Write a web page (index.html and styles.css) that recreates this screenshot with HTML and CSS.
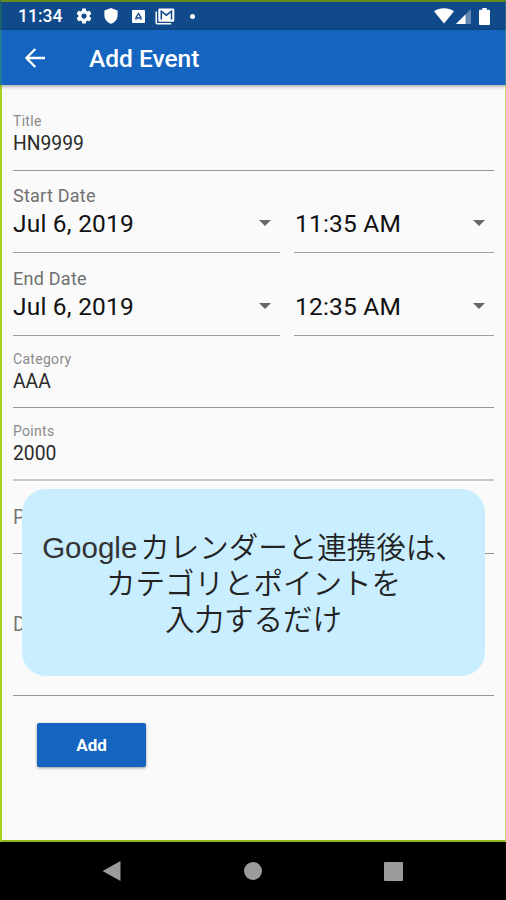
FILE: index.html
```html
<!DOCTYPE html>
<html lang="ja">
<head>
<meta charset="UTF-8">
<meta name="viewport" content="width=device-width, initial-scale=1.0">
<title>Add Event</title>
<link rel="stylesheet" href="styles.css">
</head>
<body>

<div class="screen">

    <div class="status-bar">
        <span class="clock">11:34</span>
        <svg class="icon-gear" width="18" height="18" viewBox="0 0 24 24"><path fill="#fff" d="M19.43 12.98c.04-.32.07-.64.07-.98s-.03-.66-.07-.98l2.11-1.65c.19-.15.24-.42.12-.64l-2-3.46c-.12-.22-.39-.3-.61-.22l-2.49 1c-.52-.4-1.08-.73-1.69-.98l-.38-2.65C14.46 2.18 14.25 2 14 2h-4c-.25 0-.46.18-.49.42l-.38 2.65c-.61.25-1.17.59-1.69.98l-2.49-1c-.23-.09-.49 0-.61.22l-2 3.46c-.13.22-.07.49.12.64l2.11 1.65c-.04.32-.07.65-.07.98s.03.66.07.98l-2.11 1.65c-.19.15-.24.42-.12.64l2 3.46c.12.22.39.3.61.22l2.49-1c.52.4 1.08.73 1.69.98l.38 2.65c.03.24.24.42.49.42h4c.25 0 .46-.18.49-.42l.38-2.65c.61-.25 1.17-.59 1.69-.98l2.49 1c.23.09.49 0 .61-.22l2-3.46c.12-.22.07-.49-.12-.64l-2.11-1.65zM12 15.5c-1.93 0-3.5-1.57-3.5-3.5s1.57-3.5 3.5-3.5 3.5 1.57 3.5 3.5-1.57 3.5-3.5 3.5z"/></svg>
        <svg class="icon-shield" width="14" height="16" viewBox="0 0 14 16"><path fill="#fff" d="M7 0l6.6 2.4v4.8c0 4-2.700 7.300-6.600 8.600C3.100 14.500.4 11.200.4 7.200V2.400z"/></svg>
        <svg class="icon-a" width="13" height="13" viewBox="0 0 13 13"><rect width="13" height="13" rx="1" fill="#fff"/><path d="M4 9.800V7.500L6.500 3.500 9 7.500v2.300M4.800 8h3.400" fill="none" stroke="#104a8b" stroke-width="1.300"/></svg>
        <svg class="icon-mail" width="20" height="17" viewBox="0 0 20 17"><path d="M1.200 3.500v11.300q0 1 1 1h14" fill="none" stroke="#fff" stroke-width="1.500"/><rect x="3.300" y=".5" width="16" height="13.300" rx="1.300" fill="#fff"/><path d="M6.300 11.500V3.200l5.100 4 5.100-4v8.300" fill="none" stroke="#104a8b" stroke-width="1.500"/></svg>
        <span class="dot"></span>
        <div class="signals">
            <svg width="20" height="16" viewBox="0 0 20 16"><path fill="#fff" d="M0 3.200C5.500-.8 14.500-.8 20 3.200L10 15.600z"/></svg>
            <svg width="15" height="15" viewBox="0 0 15 15"><path fill="#fff" fill-opacity=".35" d="M15 0v15H0z"/><path fill="#fff" d="M9.500 5.500V15H0z"/></svg>
            <svg class="battery" width="11" height="17" viewBox="0 0 11 17"><path fill="#fff" d="M3.300 0h4.400v1.800H10q1 0 1 1V16q0 1-1 1H1q-1 0-1-1V2.800q0-1 1-1h2.300z"/></svg>
        </div>
    </div>

    <div class="app-bar">
        <svg width="20" height="20" viewBox="0 0 20 20"><path d="M20 10H2M10.300 1L1.400 10l8.900 9" fill="none" stroke="#fff" stroke-width="2.300"/></svg>
        <span class="app-title">Add Event</span>
    </div>

    <div class="form">
        <div class="field field-first">
            <div class="label">Title</div>
            <div class="value">HN9999</div>
        </div>

        <div class="date-row">
            <div class="picker">
                <div class="date-label">Start Date</div>
                <div class="date-value">Jul 6, 2019<span class="arrow"></span></div>
            </div>
            <div class="picker">
                <div class="date-value">11:35 AM<span class="arrow"></span></div>
            </div>
        </div>

        <div class="date-row date-row-end">
            <div class="picker">
                <div class="date-label">End Date</div>
                <div class="date-value">Jul 6, 2019<span class="arrow"></span></div>
            </div>
            <div class="picker">
                <div class="date-value">12:35 AM<span class="arrow"></span></div>
            </div>
        </div>

        <div class="field">
            <div class="label">Category</div>
            <div class="value">AAA</div>
        </div>

        <div class="field field-points">
            <div class="label">Points</div>
            <div class="value">2000</div>
        </div>

        <div class="field field-empty">P</div>
        <div class="field field-empty field-tall">D</div>

        <button class="add-btn">Add</button>
    </div>

    <div class="nav-bar">
        <svg width="19" height="22" viewBox="0 0 19 22"><path fill="#9b9b9b" d="M18.500 1v20L.5 11z"/></svg>
        <span class="home"></span>
        <span class="recent"></span>
    </div>

    <div class="caption"><span class="latin">Google</span>カレンダーと連携後は、<br>カテゴリとポイントを<br>入力するだけ</div>

</div>

</body>
</html>
```
FILE: styles.css
```css
*{
    box-sizing:border-box;
}

body{
    margin:0;
    background:#000;
    font-family:Roboto, "Noto Sans CJK JP", sans-serif;
}

.screen{
    position:relative;
    width:506px;
    height:900px;
    display:flex;
    flex-direction:column;
    overflow:hidden;
}

/* top bars */
.status-bar{
    height:30px;
    flex:none;
    display:flex;
    align-items:center;
    padding:0 15px 0 16px;
    background:#104a8b;
    border-top:2px solid #648c1c;
    border-left:2px solid #195f70;
    border-right:1px solid #2b6a78;
    color:#fff;
}

.clock{
    width:45px;
    font-size:17.5px;
    font-weight:500;
}

.icon-gear{ margin-left:12px; }
.icon-shield{ margin-left:11px; }
.icon-a{ margin-left:14px; }
.icon-mail{ margin-left:10px; }

.dot{
    width:5px;
    height:5px;
    margin-left:15px;
    border-radius:50%;
    background:#fff;
}

.signals{
    display:flex;
    align-items:center;
    margin-left:auto;
    gap:2px;
}

.battery{
    margin-left:6px;
}

.app-bar{
    position:relative;
    height:55px;
    flex:none;
    display:flex;
    align-items:center;
    padding:1px 0 0 23px;
    background:#1565c0;
    border-left:2px solid #247c98;
    border-right:1px solid #2b8f9c;
    box-shadow:0 1px 4px rgba(0,0,0,.4);
    color:#fff;
}

.app-title{
    margin-left:44px;
    padding-top:1px;
    font-size:24.5px;
    font-weight:500;
}

/* form */
.form{
    height:757px;
    flex:none;
    padding:0 11px;
    background:#fafafa;
    border-left:2px solid #a9d120;
    border-right:1px solid #c4dd72;
    border-bottom:2px solid #91b71b;
}

.field{
    height:72px;
    padding-top:14px;
    border-bottom:1px solid #969696;
}

.field-first{
    height:86px;
    padding-top:27px;
}

.field-points{
    height:73px;
    padding-top:14px;
    border-bottom:2px solid #c8c8c8;
}

.label{
    font-size:14px;
    line-height:18px;
    letter-spacing:.3px;
    color:#8a8a8a;
}

.value{
    font-size:19.3px;
    line-height:28px;
    color:#2a2a2a;
}

.field-empty{
    height:73px;
    padding-top:24px;
    font-size:19.3px;
    line-height:26px;
    color:#777;
}

.field-tall{
    height:142px;
    padding-top:58px;
}

.date-row{
    display:grid;
    grid-template-columns:267px 200px;
    gap:14px;
    height:82px;
}

.date-row-end{
    height:83px;
}

.picker{
    display:flex;
    flex-direction:column;
    justify-content:flex-end;
    border-bottom:1px solid #a0a0a0;
}

.date-label{
    font-size:18px;
    line-height:22px;
    letter-spacing:.25px;
    color:#707070;
}

.date-value{
    display:flex;
    align-items:center;
    justify-content:space-between;
    height:33px;
    margin-bottom:12px;
    padding-right:9px;
    font-size:24.5px;
    letter-spacing:.2px;
    color:#111;
}

.picker + .picker .date-value{
    padding-left:1px;
}

.arrow{
    margin-top:-1px;
    border:6px solid transparent;
    border-top-color:#666;
    border-bottom:0;
}

.add-btn{
    display:block;
    width:109px;
    height:44px;
    margin:27px 0 0 24px;
    padding:0;
    border:none;
    border-radius:2px;
    background:#1565c0;
    box-shadow:0 1px 3px rgba(0,0,0,.4);
    color:#fff;
    font-family:inherit;
    font-size:17px;
    font-weight:700;
}

/* android navigation */
.nav-bar{
    flex:1;
    display:flex;
    align-items:center;
    justify-content:space-between;
    padding:0 103px 0 102px;
    background:#000;
}

.home{
    width:18px;
    height:18px;
    border-radius:50%;
    background:#9b9b9b;
}

.recent{
    width:19px;
    height:19px;
    border-radius:1px;
    background:#9b9b9b;
}

/* message over the form */
.caption{
    position:absolute;
    left:22px;
    top:489px;
    width:463px;
    height:187px;
    padding-top:41px;
    border-radius:24px;
    background:#c9eeff;
    color:#222;
    font-family:"Liberation Sans", "Noto Sans CJK JP", sans-serif;
    font-size:29.5px;
    font-weight:350;
    line-height:36px;
    text-align:center;
    white-space:nowrap;
}

.latin{
    margin-right:3px;
    color:#333;
}
```
